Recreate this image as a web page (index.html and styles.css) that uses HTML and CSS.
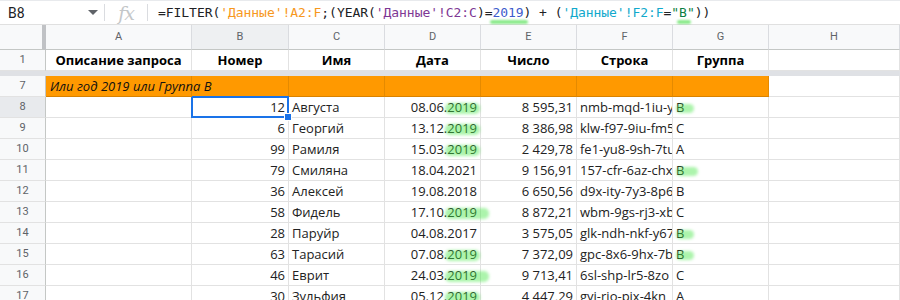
FILE: index.html
```html
<!DOCTYPE html>
<html lang="ru">
<head>
<meta charset="utf-8">
<link rel="stylesheet" href="styles.css">
</head>
<body>
<div class="fbar">
  <div class="namebox">B8<span class="caret"></span></div>
  <div class="sep"></div>
  <div class="fx">fx</div>
  <div class="sep"></div>
  <div class="formula">=FILTER(<span class="c-or">'Данные'!A2:F</span>;(YEAR(<span class="c-pu">'Данные'!C2:C</span>)=<span class="c-bl hlu">2019</span>) + (<span class="c-te">'Данные'!F2:F</span>=<span class="c-gr">"<span class="hlu">B</span>"</span>))</div>
</div>
<div class="sheet">
  <div class="row colhdr">
    <div class="cell corner"></div>
    <div class="cell">A</div><div class="cell sel">B</div><div class="cell">C</div><div class="cell">D</div><div class="cell">E</div><div class="cell">F</div><div class="cell">G</div><div class="cell">H</div>
  </div>
  <div class="row head">
    <div class="cell rh">1</div>
    <div class="cell">Описание запроса</div><div class="cell">Номер</div><div class="cell">Имя</div><div class="cell">Дата</div><div class="cell">Число</div><div class="cell">Строка</div><div class="cell">Группа</div><div class="cell"></div>
  </div>
  <div class="freeze"></div>
  <div class="row orange">
    <div class="cell rh">7</div>
    <div class="cell title">Или год 2019 или Группа B</div><div class="cell"></div><div class="cell"></div><div class="cell"></div><div class="cell"></div><div class="cell"></div><div class="cell"></div><div class="cell white"></div>
  </div>
  <div class="row">
    <div class="cell rh selrh">8</div><div class="cell"></div>
    <div class="cell num active">12<span class="handle"></span></div><div class="cell">Августа</div><div class="cell num">08.06.<span class="hl">2019</span></div><div class="cell num">8 595,31</div><div class="cell clip">nmb-mqd-1iu-y6k</div><div class="cell"><span class="hl hb">B</span></div><div class="cell"></div>
  </div>
  <div class="row">
    <div class="cell rh">9</div><div class="cell"></div>
    <div class="cell num">6</div><div class="cell">Георгий</div><div class="cell num">13.12.<span class="hl">2019</span></div><div class="cell num">8 386,98</div><div class="cell clip">klw-f97-9iu-fm5</div><div class="cell">C</div><div class="cell"></div>
  </div>
  <div class="row">
    <div class="cell rh">10</div><div class="cell"></div>
    <div class="cell num">99</div><div class="cell">Рамиля</div><div class="cell num">15.03.<span class="hl">2019</span></div><div class="cell num">2 429,78</div><div class="cell clip">fe1-yu8-9sh-7tu</div><div class="cell">A</div><div class="cell"></div>
  </div>
  <div class="row">
    <div class="cell rh">11</div><div class="cell"></div>
    <div class="cell num">79</div><div class="cell">Смиляна</div><div class="cell num">18.04.2021</div><div class="cell num">9 156,91</div><div class="cell clip">157-cfr-6az-chx</div><div class="cell"><span class="hl hbw">B</span></div><div class="cell"></div>
  </div>
  <div class="row">
    <div class="cell rh">12</div><div class="cell"></div>
    <div class="cell num">36</div><div class="cell">Алексей</div><div class="cell num">19.08.2018</div><div class="cell num">6 650,56</div><div class="cell clip">d9x-ity-7y3-8p6</div><div class="cell">B</div><div class="cell"></div>
  </div>
  <div class="row">
    <div class="cell rh">13</div><div class="cell"></div>
    <div class="cell num">58</div><div class="cell">Фидель</div><div class="cell num">17.10.<span class="hl hlw">2019</span></div><div class="cell num">8 872,21</div><div class="cell clip">wbm-9gs-rj3-xb1</div><div class="cell">C</div><div class="cell"></div>
  </div>
  <div class="row">
    <div class="cell rh">14</div><div class="cell"></div>
    <div class="cell num">28</div><div class="cell">Паруйр</div><div class="cell num">04.08.2017</div><div class="cell num">3 575,05</div><div class="cell clip">glk-ndh-nkf-y67</div><div class="cell"><span class="hl hb">B</span></div><div class="cell"></div>
  </div>
  <div class="row">
    <div class="cell rh">15</div><div class="cell"></div>
    <div class="cell num">63</div><div class="cell">Тарасий</div><div class="cell num">07.08.<span class="hl">2019</span></div><div class="cell num">7 372,09</div><div class="cell clip">gpc-8x6-9hx-7b1</div><div class="cell"><span class="hl hb">B</span></div><div class="cell"></div>
  </div>
  <div class="row">
    <div class="cell rh">16</div><div class="cell"></div>
    <div class="cell num">46</div><div class="cell">Еврит</div><div class="cell num">24.03.<span class="hl hlw">2019</span></div><div class="cell num">9 713,41</div><div class="cell clip">6sl-shp-lr5-8zo</div><div class="cell">C</div><div class="cell"></div>
  </div>
  <div class="row">
    <div class="cell rh">17</div><div class="cell"></div>
    <div class="cell num">30</div><div class="cell">Зульфия</div><div class="cell num">05.12.<span class="hl">2019</span></div><div class="cell num">4 447,29</div><div class="cell clip">gyi-rio-pix-4kn</div><div class="cell">A</div><div class="cell"></div>
  </div>
</div>
</body>
</html>
```
FILE: styles.css
```css
html, body { margin: 0; padding: 0; background: #fff; }
body { width: 900px; height: 300px; overflow: hidden; font-family: "Open Sans", "Noto Sans", sans-serif; color: #222; }

.fbar {
  height: 25px;
  border-top: 1px solid #e8eaed;
  border-bottom: 1px solid #e0e0e0;
  box-sizing: border-box;
  display: flex;
  align-items: center;
}
.namebox {
  width: 104px;
  box-sizing: border-box;
  padding-left: 8px;
  font: 14px Roboto, "Liberation Sans", sans-serif;
  color: #202124;
  display: flex;
  align-items: center;
  position: relative;
}
.caret {
  margin-left: auto;
  margin-right: 6px;
  width: 0; height: 0;
  border-left: 5px solid transparent;
  border-right: 5px solid transparent;
  border-top: 5px solid #5f6368;
}
.sep { width: 1px; height: 17px; background: #dadce0; }
.fx {
  width: 42px;
  text-align: center;
  font: italic 19px "DejaVu Serif", "Liberation Serif", serif;
  color: #c4c7c9;
  line-height: 20px;
  letter-spacing: -1px;
}
.formula {
  padding-left: 10px;
  font: 13px "DejaVu Sans Mono", "Liberation Mono", monospace;
  color: #202124;
  white-space: nowrap;
  letter-spacing: -0.05px;
}
.c-or { color: #f7981d; }
.c-pu { color: #7e3794; }
.c-bl { color: #3d5bcc; }
.c-te { color: #11a9cc; }
.c-gr { color: #0b8043; }
.hlu { position: relative; }
.hlu::after {
  content: "";
  position: absolute;
  left: -2px; right: -4px;
  bottom: -4px; height: 4px;
  background: rgba(60, 220, 60, 0.6);
  border-radius: 3px;
  filter: blur(1px);
}

.sheet { position: relative; }
.row {
  display: grid;
  grid-template-columns: 46px 146px 97px 96px 96px 96px 96px 96px 1fr;
  height: 21px;
}
.cell {
  box-sizing: border-box;
  border-right: 1px solid #e2e2e2;
  border-bottom: 1px solid #e2e2e2;
  font-size: 13px;
  line-height: 20px;
  padding: 0 3px;
  white-space: nowrap;
  position: relative;
}
.num { text-align: right; }
.clip { overflow: hidden; padding-right: 0; }

.colhdr { height: 25px; }
.colhdr .cell {
  background: #f8f9fa;
  color: #5f6368;
  font: 11px Roboto, "Liberation Sans", sans-serif;
  line-height: 24px;
  text-align: center;
  border-right-color: #dadce0;
  border-bottom-color: #c4c7c5;
}
.colhdr .corner { border-right: 4px solid #c0c2c5; }
.colhdr .sel { background: #eef0f2; }

.rh {
  background: #f8f9fa;
  color: #5f6368;
  font: 11px Roboto, "Liberation Sans", sans-serif;
  line-height: 20px;
  text-align: center;
  border-right-color: #c4c7c5;
  border-bottom-color: #e2e2e2;
}
.selrh { background: #e8eaed; }

.head .cell:not(.rh) { font-weight: 700; text-align: center; color: #000; }

.freeze { height: 5px; background: #dfe1e5; }

.orange .cell:not(.rh) {
  background: #ff9900;
  border-right-color: #e58a00;
  border-bottom-color: #d98200;
}
.orange .cell.white { background: #fff; border-right-color: #e2e2e2; border-bottom-color: #e2e2e2; }
.orange .title { font-style: italic; color: #111; z-index: 1; overflow: visible; padding-left: 4px; }

.active { outline: none; }
.active::before {
  content: "";
  position: absolute;
  left: -1px; top: -1px; right: -1px; bottom: -1px;
  border: 2px solid #1a73e8;
}
.handle {
  position: absolute;
  right: -3px; bottom: -3px;
  width: 6px; height: 6px;
  background: #1a73e8;
  border: 1px solid #fff;
  box-sizing: content-box;
  right: -4px; bottom: -4px;
  z-index: 2;
}

.hl { position: relative; }
.hl::after {
  content: "";
  position: absolute;
  left: -2px; right: -3px;
  top: 5px; bottom: 2px;
  background: rgba(70, 230, 70, 0.45);
  border-radius: 5px;
  filter: blur(1.5px);
}
.hlw::after { right: -12px; }
.hb::after { left: 0; right: -10px; top: 6px; bottom: 3px; }
.hbw::after { left: 0; right: -14px; top: 6px; bottom: 3px; }
```
